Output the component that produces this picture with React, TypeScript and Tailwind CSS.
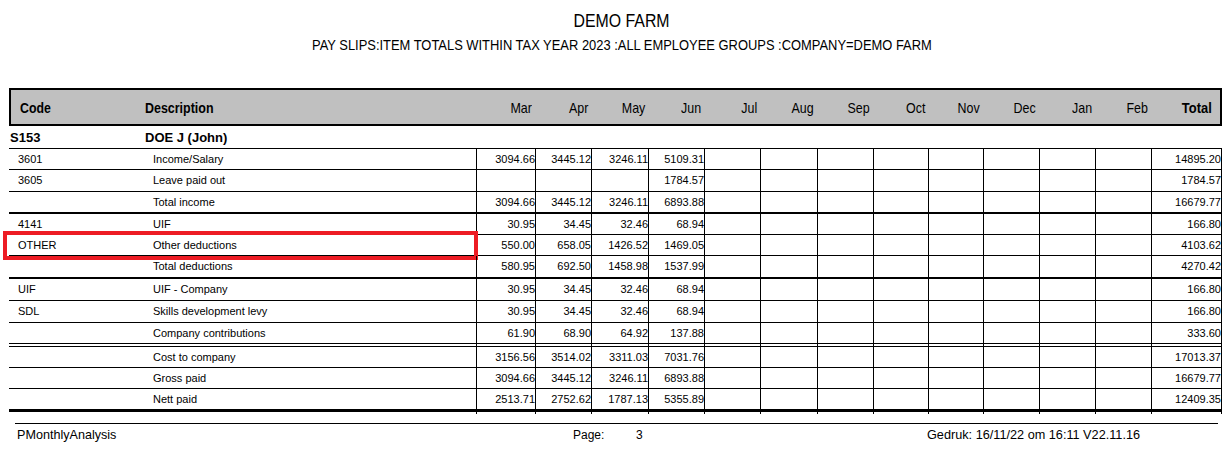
import React from "react";

type Row = {
  code: string;
  desc: string;
  vals: string[];
  total: string;
  h: string;
  border: string;
  highlight?: boolean;
};

const widths = [
  "w-[59px]",
  "w-[56px]",
  "w-[57px]",
  "w-[56px]",
  "w-[56px]",
  "w-[57px]",
  "w-[56px]",
  "w-[55px]",
  "w-[55px]",
  "w-[56px]",
  "w-[56px]",
  "w-[56px]",
];

const months = ["Mar", "Apr", "May", "Jun", "Jul", "Aug", "Sep", "Oct", "Nov", "Dec", "Jan", "Feb"];

const rows: Row[] = [
  { code: "3601", desc: "Income/Salary", vals: ["3094.66", "3445.12", "3246.11", "5109.31"], total: "14895.20", h: "h-[21px]", border: "border-b" },
  { code: "3605", desc: "Leave paid out", vals: ["", "", "", "1784.57"], total: "1784.57", h: "h-[22px]", border: "border-b" },
  { code: "", desc: "Total income", vals: ["3094.66", "3445.12", "3246.11", "6893.88"], total: "16679.77", h: "h-[22px]", border: "border-b-2" },
  { code: "4141", desc: "UIF", vals: ["30.95", "34.45", "32.46", "68.94"], total: "166.80", h: "h-[21px]", border: "border-b" },
  { code: "OTHER", desc: "Other deductions", vals: ["550.00", "658.05", "1426.52", "1469.05"], total: "4103.62", h: "h-[21px]", border: "border-b", highlight: true },
  { code: "", desc: "Total deductions", vals: ["580.95", "692.50", "1458.98", "1537.99"], total: "4270.42", h: "h-[23px]", border: "border-b-2" },
  { code: "UIF", desc: "UIF - Company", vals: ["30.95", "34.45", "32.46", "68.94"], total: "166.80", h: "h-[22px]", border: "border-b" },
  { code: "SDL", desc: "Skills development levy", vals: ["30.95", "34.45", "32.46", "68.94"], total: "166.80", h: "h-[22px]", border: "border-b" },
  { code: "", desc: "Company contributions", vals: ["61.90", "68.90", "64.92", "137.88"], total: "333.60", h: "h-[21px]", border: "border-b" },
];

const rows2: Row[] = [
  { code: "", desc: "Cost to company", vals: ["3156.56", "3514.02", "3311.03", "7031.76"], total: "17013.37", h: "h-[22px]", border: "border-y" },
  { code: "", desc: "Gross paid", vals: ["3094.66", "3445.12", "3246.11", "6893.88"], total: "16679.77", h: "h-[21px]", border: "border-b" },
  { code: "", desc: "Nett paid", vals: ["2513.71", "2752.62", "1787.13", "5355.89"], total: "12409.35", h: "h-[23px]", border: "border-b-[3px]" },
];

function DataRow({ r }: { r: Row }) {
  return (
    <div className={`relative flex ${r.h} ${r.border} border-black text-[11px] leading-none`}>
      <div className="w-[136px] pl-[9px] flex items-center">{r.code}</div>
      <div className="w-[332px] pl-[8px] flex items-center border-r border-black">{r.desc}</div>
      {widths.map((w, i) => (
        <div key={i} className={`${w} flex items-center justify-end border-r border-black`}>
          {r.vals[i] ?? ""}
        </div>
      ))}
      <div className="w-[70px] flex items-center justify-end border-r border-black">{r.total}</div>
      {r.highlight && (
        <div className="absolute left-[-6px] top-[-4px] w-[475px] h-[29px] border-4 border-[#ed1c24]" />
      )}
    </div>
  );
}

function Spacer({ h }: { h: string }) {
  return (
    <div className={`flex ${h}`}>
      <div className="w-[136px]" />
      <div className="w-[332px] border-r border-black" />
      {widths.map((w, i) => (
        <div key={i} className={`${w} border-r border-black`} />
      ))}
      <div className="w-[70px] border-r border-black" />
    </div>
  );
}

export default function App() {
  return (
    <div className="w-[1231px] h-[453px] bg-white text-black overflow-hidden font-['Liberation_Sans',Arial,sans-serif]">
      <div className="pl-[12px] pt-[11px] flex flex-col items-center">
        <div className="inline-block text-[19px] leading-[19px] scale-x-[0.835]">DEMO FARM</div>
        <div className="inline-block mt-[7px] text-[15px] leading-[15px] whitespace-nowrap scale-x-[0.861]">
          PAY SLIPS:ITEM TOTALS WITHIN TAX YEAR 2023 :ALL EMPLOYEE GROUPS :COMPANY=DEMO FARM
        </div>
      </div>

      <div className="ml-[9px] mt-[36px] w-[1213px] h-[38px] border-2 border-black bg-[#c0c0c0] flex items-center text-[15px] leading-none">
        <div className="w-[134px] pl-[9px]">
          <span className="inline-block font-bold scale-x-[0.82] origin-left">Code</span>
        </div>
        <div className="w-[332px]">
          <span className="inline-block font-bold scale-x-[0.83] origin-left">Description</span>
        </div>
        {months.map((m, i) => (
          <div key={m} className={`${widths[i]} text-right pr-[4px]`}>
            <span className="inline-block scale-x-[0.83] origin-right">{m}</span>
          </div>
        ))}
        <div className="w-[68px] text-right pr-[8px]">
          <span className="inline-block font-bold scale-x-[0.86] origin-right">Total</span>
        </div>
      </div>

      <div className="ml-[9px] w-[1213px] h-[22px] flex items-center text-[13px] font-bold leading-none">
        <div className="w-[136px] pl-[1px]">S153</div>
        <div>DOE J (John)</div>
      </div>

      <div className="ml-[9px] w-[1213px] border-t border-black">
        {rows.map((r, i) => (
          <DataRow key={i} r={r} />
        ))}
        <Spacer h="h-[2px]" />
        {rows2.map((r, i) => (
          <DataRow key={i} r={r} />
        ))}
        <Spacer h="h-[2px]" />
      </div>

      <div className="ml-[15px] mt-[9px] w-[1203px] border-t border-black" />
      <div className="ml-[15px] mt-[5px] flex text-[12px] leading-none">
        <div className="w-[558px] pl-[2px] text-[12.6px]">PMonthlyAnalysis</div>
        <div className="w-[63px]">Page:</div>
        <div className="w-[291px]">3</div>
        <div className="text-[12.7px]">Gedruk: 16/11/22 om 16:11 V22.11.16</div>
      </div>
    </div>
  );
}
